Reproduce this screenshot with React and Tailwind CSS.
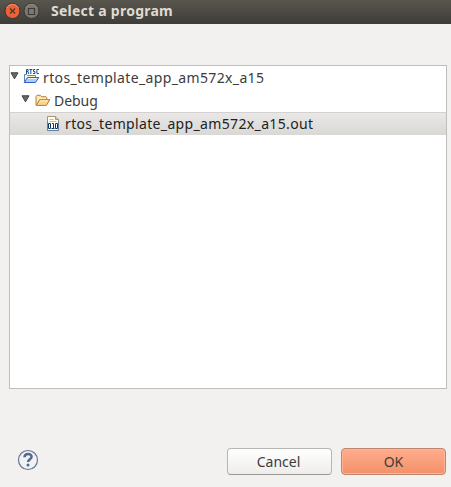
function Expander() {
  return (
    <svg className="shrink-0" width="9" height="8" viewBox="0 0 9 8">
      <path d="M1 .8h7L4.5 6.8z" fill="#6a6a68" stroke="#3f3f3d" strokeWidth="1" strokeLinejoin="round" />
    </svg>
  );
}

function ProjectIcon() {
  return (
    <svg className="block shrink-0" width="17" height="17" viewBox="0 0 17 17">
      <path d="M1.5 14V6.5h2l1 1h8v2" fill="#fff3c4" stroke="#5b87bf" />
      <path d="M1.2 14.5l3.3-5h11.3l-3.3 5z" fill="#a9cdf5" stroke="#2f62c4" strokeLinejoin="round" />
      <path d="M5 10.5h8.8" stroke="#e3f0ff" />
      <path
        d="M3.5 6V1.5h1.6v2H3.5M5 4l.8 2M6.4 1.5h2.9M7.8 1.5V6M12.2 1.5h-1.7v2h1.4v2H10M15.9 1.5h-2v4h2"
        fill="none"
        stroke="#174f92"
        strokeWidth="1"
      />
    </svg>
  );
}

function FolderIcon() {
  return (
    <svg className="shrink-0" width="16" height="13" viewBox="0 0 16 13">
      <path d="M1 11V2.5L2 1.3h3.3l1.2 1.4H11l.8 1v2" fill="#fce9b4" stroke="#b5803c" />
      <path d="M1.2 11.4l3.4-5.7h10.2l-3.4 5.7z" fill="#fbd58b" stroke="#b17a36" strokeLinejoin="round" />
      <path d="M5.2 6.8h7.6" stroke="#fff2ca" />
    </svg>
  );
}

function BinaryIcon() {
  return (
    <svg className="block shrink-0" width="14" height="16" viewBox="0 0 14 16">
      <path d="M1.5.5h8l3 3v11h-11z" fill="#fffef7" stroke="#a5976b" />
      <path d="M1.5 5v9.5h11V5" fill="none" stroke="#6282b0" />
      <path d="M9.5.5v3h3" fill="#e9cf89" stroke="#b29352" />
      <path d="M3.5 3.5h4M3.5 5.5h7" stroke="#a9bedb" />
      <path d="M2 7h10v7H2z" fill="#fff" />
      <path d="M2.5 7.5h2v5h-2zM9.5 7.5h2v5h-2zM6 7.5h1.5v5M5.5 12.5h3" fill="none" stroke="#12385f" />
    </svg>
  );
}

export default function App() {
  return (
    <div className="flex h-[487px] w-[451px] flex-col overflow-hidden bg-[#f2f1f0] font-['Noto_Sans','Open_Sans',sans-serif] text-[14px] leading-[22px] text-[#3c3c3c]">
      <header className="flex h-6 shrink-0 items-center bg-linear-to-b from-[#59564e] to-[#3d3c37] pl-[4px]">
        <svg className="mt-[-3px]" width="36" height="18" viewBox="0 0 36 18">
          <circle cx="8.5" cy="9" r="7.5" fill="#ed6138" stroke="#353430" />
          <path d="M2.5 6a6.7 6.7 0 0 1 12 0" fill="none" stroke="#f58f68" />
          <path d="M6 6.5l5 5m0-5l-5 5" stroke="#54392b" strokeWidth="1.4" />
          <circle cx="27.5" cy="9" r="7.5" fill="#7a7871" stroke="#37362f" />
          <path d="M21.5 6a6.7 6.7 0 0 1 12 0" fill="none" stroke="#908e85" />
          <path d="M24.5 6.5h6v6h-6z" fill="none" stroke="#3d3c36" strokeWidth="1.2" />
        </svg>
        <h1 className="mt-[-3px] ml-[11px] text-[14px] leading-[22px] font-bold tracking-[0.25px] whitespace-nowrap text-[#dfdbd2]">
          Select a program
        </h1>
      </header>
      <main className="mt-[41px] ml-[9px] h-[324px] w-[438px] shrink-0 border border-[#c0beb9] bg-white whitespace-nowrap">
        <div className="flex h-[23px] items-center">
          <span className="mt-[-4px]"><Expander /></span>
          <span className="mt-[-3px] ml-[4px]"><ProjectIcon /></span>
          <span className="ml-[3px] tracking-[0.36px]">rtos_template_app_am572x_a15</span>
        </div>
        <div className="flex h-[23px] items-center pl-[11px]">
          <span className="mt-[-4px]"><Expander /></span>
          <span className="ml-[5px]"><FolderIcon /></span>
          <span className="ml-[3px] tracking-[-0.05px]">Debug</span>
        </div>
        <div className="flex h-[23px] items-center border-t border-[#d3d2d0] bg-linear-to-b from-[#e9e8e7] to-[#d9d8d5] pl-[36px] text-[#222]">
          <BinaryIcon />
          <span className="ml-[5px] tracking-[0.35px]">rtos_template_app_am572x_a15.out</span>
        </div>
      </main>
      <footer className="mt-[59px] flex h-[27px] shrink-0 items-center pl-[17px]">
        <svg className="mt-[-3px]" width="22" height="22" viewBox="0 0 22 22">
          <circle cx="11" cy="11" r="9.5" fill="#f1f2f4" stroke="#657893" strokeWidth="1.2" />
          <path d="M7.5 8.2C7.7 4.2 14.6 4 14.6 7.8c0 2.5-3.5 2.5-3.5 5.3" fill="none" stroke="#53698a" strokeWidth="2.5" />
          <circle cx="11" cy="16" r="1.5" fill="#53698a" />
        </svg>
        <button className="ml-[188px] h-[27px] w-[105px] rounded-[4px] border border-[#b8b6b2] border-b-[#999894] bg-linear-to-b from-white to-[#eeedeb] pr-[2px] leading-[24px]">
          Cancel
        </button>
        <button className="ml-[9px] h-[27px] w-[105px] rounded-[4px] border border-[#bd866e] bg-linear-to-b from-[#ffad8e] to-[#f39068] leading-[24px] shadow-[inset_0_0_0_1px_#ffb494]">
          OK
        </button>
      </footer>
    </div>
  );
}
